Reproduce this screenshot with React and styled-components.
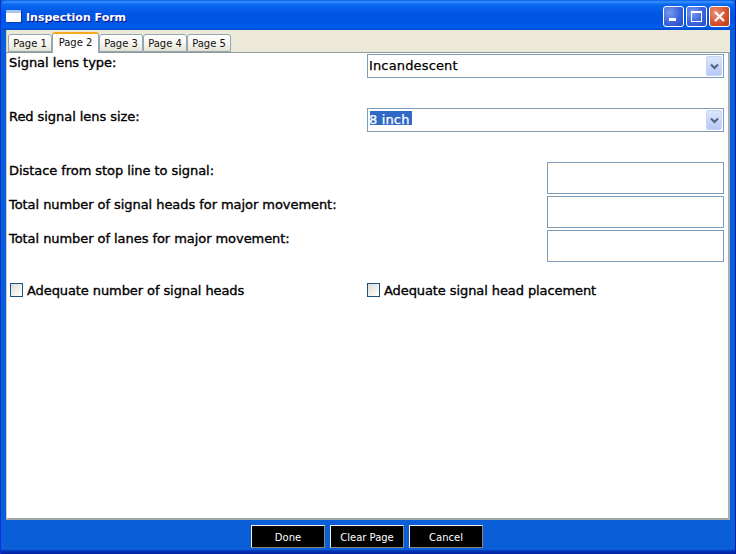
import React from "react";
import styled, { createGlobalStyle } from "styled-components";

const Global = createGlobalStyle`
  html, body { margin: 0; padding: 0; background: #0054e3; }
  #root { width: 736px; height: 554px; overflow: hidden; }
`;
const Win = styled.div`
  width: 736px; height: 554px; box-sizing: border-box; display: flex; flex-direction: column;
  font-family: "DejaVu Sans", sans-serif; position: relative; overflow: hidden;
  background: #0a5fd8;
  border-left: 1px solid #0831d9; border-right: 1px solid #001ea0;
`;
const TitleBar = styled.div`
  height: 30px; flex: none; box-sizing: border-box; display: flex; align-items: center;
  padding: 3px 5px 0 5px; gap: 5px;
  background: linear-gradient(180deg, #0058e6 0%, #3a93ff 6%, #0a6af0 14%, #0055e5 45%, #0055e5 75%, #0160f0 90%, #0348c8 100%);
  border-radius: 6px 6px 0 0;
`;
const TitleText = styled.div`
  color: #fff; font: 700 11px "DejaVu Sans", sans-serif; flex: 1; padding-top: 2px;
  text-shadow: 1px 1px 0 #0f1089;
`;
const WinIcon = styled.div`
  width: 15px; height: 12px; box-sizing: border-box; background: #fff; border-top: 3px solid #a9c6ee;
  border-radius: 1px; box-shadow: 1px 1px 0 #0f3c9c; margin-bottom: 2px;
`;
const Btns = styled.div`display: flex; gap: 2px;`;
const CapBtn = styled.div`
  width: 21px; height: 21px; box-sizing: border-box; border: 1px solid #fff; border-radius: 3px;
  display: flex; align-items: center; justify-content: center;
  background: ${p => p.$close
    ? "radial-gradient(circle at 30% 30%, #e8907a, #d8542e 55%, #b83a14)"
    : "radial-gradient(circle at 30% 30%, #7a9bf0, #3b64dc 55%, #2a48c0)"};
`;
const Client = styled.div`
  flex: 1; display: flex; flex-direction: column; margin: 0 5px 0 5px; min-height: 0;
`;
const TabStrip = styled.div`
  height: 22px; flex: none; box-sizing: border-box; background: #ece9d8; display: flex; align-items: flex-end;
  padding-left: 1px; border-left: 1px solid #cfcbb8; position: relative;
`;
const Tab = styled.div`
  box-sizing: border-box; font: 400 10px "DejaVu Sans", sans-serif; color: #111;
  display: flex; align-items: center; justify-content: center;
  width: ${p => p.$w}px;
  height: ${p => (p.$active ? 21 : 18)}px;
  margin-bottom: ${p => (p.$active ? -1 : 0)}px;
  padding-bottom: ${p => (p.$active ? 3 : 0)}px;
  background: ${p => (p.$active ? "#fff" : "linear-gradient(180deg,#fff 0%,#f4f3ec 60%,#e4e1d2 100%)")};
  border: 1px solid #91a7b4; border-bottom: ${p => (p.$active ? "none" : "1px solid #91a7b4")};
  border-top: ${p => (p.$active ? "2px solid #f6a821" : "1px solid #91a7b4")};
  border-radius: 3px 3px 0 0; position: relative; z-index: ${p => (p.$active ? 1 : 0)};
`;
const Panel = styled.div`
  height: 468px; flex: none; box-sizing: border-box; background: #fff;
  border: 1px solid #919b9c; border-left: 1px solid #c8c8c0; border-right: 2px solid #aab0b0; border-bottom: 2px solid #a0a8a8;
  padding: 1px 4px 0 2px; display: flex; flex-direction: column;
`;
const Label = styled.div`
  font: 400 13px "DejaVu Sans", sans-serif; color: #000; -webkit-text-stroke: 0.35px #000;
  letter-spacing: -0.06px; white-space: nowrap; padding-top: 1px;
`;
const CheckLabel = styled(Label)`
  padding-top: 0; letter-spacing: -0.09px;
`;
const SelectRow = styled.div`
  display: grid; grid-template-columns: 358px 357px; height: 24px; margin-bottom: 30px;
`;
const Sel = styled.div`
  height: 24px; box-sizing: border-box; border: 1px solid #7f9db9; background: #fff; display: flex; align-items: center;
  padding: 0 1px; justify-content: space-between;
`;
const SelText = styled.span`
  font: 400 13px/18px "DejaVu Sans", sans-serif; -webkit-text-stroke: 0.25px currentColor; letter-spacing: 0.15px;
  color: ${p => (p.$selected ? "#fff" : "#000")};
  background: ${p => (p.$selected ? "#316ac5" : "transparent")};
  height: 14px;
  margin: 0 0 4px ${p => (p.$selected ? 1 : 0)}px;
  text-indent: ${p => (p.$selected ? -1 : 0)}px;
  display: block; width: ${p => (p.$selected ? "42px" : "auto")}; white-space: nowrap;
`;
const Arrow = styled.div`
  width: 16px; height: 20px; border-radius: 2px; background: linear-gradient(180deg,#dbe6fb,#b6c9f6); border: 1px solid #c5d4f5; box-sizing: border-box;
  display: flex; align-items: center; justify-content: center;
`;
const InputRow = styled.div`
  display: flex; justify-content: space-between; height: 32px; margin-bottom: 2px; width: 715px;
`;
const Input = styled.div`
  width: 177px; height: 32px; box-sizing: border-box; border: 1px solid #7f9db9; background: #fff;
`;
const CheckRow = styled.div`
  display: grid; grid-template-columns: 357px 357px; margin-top: 16px;
`;
const Check = styled.div`display: flex; align-items: center; gap: 4px; height: 20px; padding-left: 1px;`;
const Box = styled.div`
  width: 13px; height: 14px; box-sizing: border-box; border: 1px solid #1c5180; margin-bottom: 1px;
  background: linear-gradient(135deg,#dcdcd7,#f5f5f2 70%,#ffffff);
`;
const Footer = styled.div`
  flex: 1; display: flex; justify-content: center; align-items: flex-start; gap: 5px; padding: 5px 2px 0 0;
  background: #0a5fd8; margin: 0 -5px;
`;
const FootBtn = styled.button`
  width: 74px; height: 23px; box-sizing: border-box; background: #000; color: #fff; padding: 2px 0 0;
  font: 400 10px "DejaVu Sans", sans-serif;
  border: 1px solid; border-color: #f4f2e8 #8a8678 #8a8678 #f4f2e8; outline: none;
`;
const BottomEdge = styled.div`height: 4px; flex: none; margin: 0 -5px; background: linear-gradient(180deg,#0340c0,#001ea0);`;

const Chevron = () => (
  <svg width="9" height="7" viewBox="0 0 9 7"><path d="M1 1.5 L4.5 5 L8 1.5" fill="none" stroke="#4d6185" strokeWidth="2" /></svg>
);

export default function App() {
  const tabs = [["Page 1", 44], ["Page 2", 47], ["Page 3", 44], ["Page 4", 44], ["Page 5", 44]];
  return (
    <Win>
      <Global />
      <TitleBar>
        <WinIcon />
        <TitleText>Inspection Form</TitleText>
        <Btns>
          <CapBtn>
            <svg width="11" height="11" viewBox="0 0 11 11"><rect x="1" y="7" width="7" height="3" fill="#fff" /></svg>
          </CapBtn>
          <CapBtn>
            <svg width="13" height="13" viewBox="0 0 13 13"><rect x="1.5" y="1.5" width="10" height="10" fill="none" stroke="#fff" /><rect x="1" y="1" width="11" height="2" fill="#fff" /></svg>
          </CapBtn>
          <CapBtn $close>
            <svg width="13" height="13" viewBox="0 0 13 13"><path d="M2 2 L11 11 M11 2 L2 11" stroke="#fff" strokeWidth="2.4" /></svg>
          </CapBtn>
        </Btns>
      </TitleBar>
      <Client>
        <TabStrip>
          {tabs.map(([t, w], i) => <Tab key={t} $w={w} $active={i === 1}>{t}</Tab>)}
        </TabStrip>
        <Panel>
          <SelectRow>
            <Label>Signal lens type:</Label>
            <Sel><SelText>Incandescent</SelText><Arrow><Chevron /></Arrow></Sel>
          </SelectRow>
          <SelectRow>
            <Label>Red signal lens size:</Label>
            <Sel><SelText $selected>8 inch</SelText><Arrow><Chevron /></Arrow></Sel>
          </SelectRow>
          <InputRow><Label>Distace from stop line to signal:</Label><Input /></InputRow>
          <InputRow><Label>Total number of signal heads for major movement:</Label><Input /></InputRow>
          <InputRow><Label>Total number of lanes for major movement:</Label><Input /></InputRow>
          <CheckRow>
            <Check><Box /><CheckLabel>Adequate number of signal heads</CheckLabel></Check>
            <Check><Box /><CheckLabel>Adequate signal head placement</CheckLabel></Check>
          </CheckRow>
        </Panel>
        <Footer>
          <FootBtn>Done</FootBtn>
          <FootBtn>Clear Page</FootBtn>
          <FootBtn>Cancel</FootBtn>
        </Footer>
        <BottomEdge />
      </Client>
    </Win>
  );
}
